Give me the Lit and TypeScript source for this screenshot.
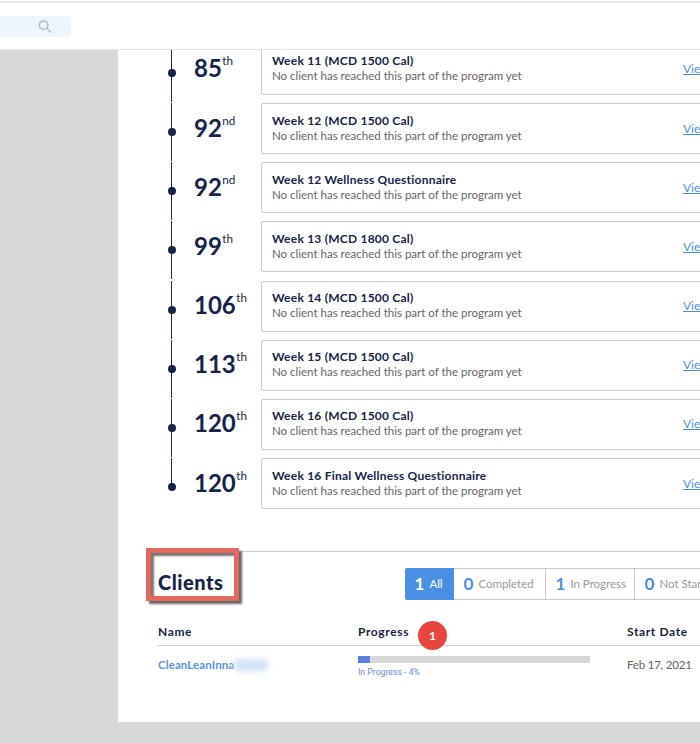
import { LitElement, html, css } from "lit";
import { customElement } from "lit/decorators.js";

interface Step { day: number; suffix: string; title: string; }

const STEPS: Step[] = [
  { day: 85, suffix: "th", title: "Week 11 (MCD 1500 Cal)" },
  { day: 92, suffix: "nd", title: "Week 12 (MCD 1500 Cal)" },
  { day: 92, suffix: "nd", title: "Week 12 Wellness Questionnaire" },
  { day: 99, suffix: "th", title: "Week 13 (MCD 1800 Cal)" },
  { day: 106, suffix: "th", title: "Week 14 (MCD 1500 Cal)" },
  { day: 113, suffix: "th", title: "Week 15 (MCD 1500 Cal)" },
  { day: 120, suffix: "th", title: "Week 16 (MCD 1500 Cal)" },
  { day: 120, suffix: "th", title: "Week 16 Final Wellness Questionnaire" },
];

@customElement("program-step")
class ProgramStep extends LitElement {
  static properties = { step: { attribute: false }, last: { type: Boolean, reflect: true } };
  declare step: Step;
  declare last: boolean;
  static styles = css`
    :host { display: grid; grid-template-columns: 76px 67px 1fr; height: 59.16px; width: 640px; box-sizing: border-box; }
    .rail { display: grid; justify-content: center; justify-items: center; grid-template-columns: 8px; margin-left: 32px; }
    .line { grid-area: 1 / 1; width: 1px; height: 58px; background: #1d2b4a; margin-right: 1px; }
    :host([last]) .line { height: 29px; }
    .dot { grid-area: 1 / 1; width: 8px; height: 8px; border-radius: 50%; background: #14244a; margin-top: 25px; }
    .day { display: flex; color: #14244a; }
    .num { font-size: 24px; font-weight: 700; line-height: 30px; margin-top: 9.42px; }
    .suf { font-size: 11.7px; line-height: 14px; margin-top: 9.42px; margin-left: 0.5px; }
    .card { height: 51px; box-sizing: border-box; border: 1px solid #c9cacc; border-radius: 2px; background: #fff; display: flex; justify-content: space-between; padding: 7.42px 10px 0; }
    .title { font-size: 12px; line-height: 17px; font-weight: 700; color: #14244a; letter-spacing: 0.23px; white-space: nowrap; width: max-content; }
    .sub { font-size: 11.5px; line-height: 13px; color: #666; white-space: nowrap; width: max-content; }
    .view { font-size: 12px; line-height: 16px; margin-top: 9px; color: #4a90e2; text-decoration: underline; margin-right: 13px; width: 51px; }
  `;
  render() {
    return html`
      <div class="rail"><span class="line"></span><span class="dot"></span></div>
      <div class="day"><span class="num">${this.step.day}</span><span class="suf">${this.step.suffix}</span></div>
      <div class="card">
        <div><div class="title">${this.step.title}</div><div class="sub">No client has reached this part of the program yet</div></div>
        <a class="view">View</a>
      </div>`;
  }
}

@customElement("app-root")
class AppRoot extends LitElement {
  static styles = css`
    :host { display: flex; flex-direction: column; width: 700px; height: 743px; overflow: hidden; background: #d8d8d8; font-family: Lato, "Open Sans", sans-serif; }
    .top { flex: none; height: 50px; box-sizing: border-box; border-bottom: 1px solid #e6e6e6; background: #fff; }
    .edge { height: 2px; margin-top: 1px; background: #e5e5e5; }
    .search { display: flex; align-items: center; justify-content: flex-end; width: 71px; height: 21px; margin-top: 13px; background: #eff5fe; border-radius: 0 3px 3px 0; box-sizing: border-box; padding-right: 19px; }
    .page { margin-left: 118px; height: 672px; background: #fff; overflow: hidden; flex: none; }
    .steps { margin-top: -6px; height: 473px; }
    .clients { width: 660px; margin: 34px 0 0 28px; padding: 0 12px; border-top: 1px solid #c9cacc; box-sizing: border-box; }
    .head { display: flex; justify-content: space-between; height: 62px; padding-top: 16px; box-sizing: border-box; }
    .box { width: 93px; height: 53px; box-sizing: border-box; margin: -20px 0 0 -12px; border: 5px solid #e2695c; box-shadow: 3px 3px 2px #666, inset 3px 3px 2px #777; display: flex; align-items: flex-end; padding: 0 0 1px 7px; }
    h2 { margin: 0; font-size: 20px; line-height: 26px; font-weight: 900; color: #14244a; letter-spacing: 0.5px; }
    .tabs { display: flex; height: 32px; box-sizing: border-box; border: 1px solid #c9cacc; border-radius: 2px; flex: none; margin-right: 15.5px; }
    .tab { display: flex; align-items: center; line-height: 30px; padding: 0 10px; border-right: 1px solid #c9cacc; color: #999; font-size: 11.5px; box-sizing: border-box; white-space: nowrap; }
    .tab b { color: #4a90e2; font-size: 17px; margin-right: 5px; }
    .tab.on { background: #4a90e2; color: #fff; margin: -1px 0 -1px -1px; line-height: 32px; border: 0; border-radius: 2px 0 0 2px; }
    .tab.on b { color: #fff; }
    .all { width: 49px; }
    .completed { width: 92px; }
    .progress { width: 89px; }
    .pending { width: 143px; border: 0; }
    .row { display: grid; grid-template-columns: 200px 269px 1fr; }
    .hd { height: 31px; border-bottom: 1px solid #cfd0d2; font-size: 12px; letter-spacing: 0.62px; font-weight: 700; color: #14244a; line-height: 35px; align-items: start; }
    .hd > * { display: flex; }
    .count { width: 29px; height: 29px; border-radius: 50%; background: #e8453f; color: #fff; display: grid; place-items: center; line-height: 29px; margin: 7px 0 -6px 9px; letter-spacing: 0; position: relative; }
    .name { color: #5b93dd; font-size: 11.5px; letter-spacing: 0.1px; line-height: 38px; height: 38px; display: flex; align-items: center; font-weight: 700; }
    .blur { width: 34px; height: 12px; background: #d3e1f7; filter: blur(3px); }
    .bar { width: 232px; height: 7px; background: #d8d8d8; margin-top: 10px; }
    .fill { height: 7px; background: #5f7fe0; }
    .pct { font: 8.7px/12px Roboto, sans-serif; color: #6d8be0; margin-top: 3px; }
    .date { color: #666; font-size: 11.5px; letter-spacing: -0.2px; line-height: 38px; }
  `;
  render() {
    return html`
      <header class="top"><div class="edge"></div>
        <div class="search"><svg width="14" height="14" viewBox="0 0 14 14" fill="none" stroke="#a9b4cc" stroke-width="1.3"><circle cx="5.6" cy="5.1" r="4.3"/><path d="M8.8 8.4 12.8 12.2"/></svg></div>
      </header>
      <main class="page">
        <div class="steps">${STEPS.map((s, i) => html`<program-step .step=${s} ?last=${i === STEPS.length - 1}></program-step>`)}</div>
        <section class="clients">
          <div class="head"><div class="box"><h2>Clients</h2></div>
            <div class="tabs">
              <div class="tab on all"><b>1</b>All</div>
              <div class="tab completed"><b>0</b>Completed</div>
              <div class="tab progress"><b>1</b>In Progress</div>
              <div class="tab pending"><b>0</b>Not Started</div>
            </div>
          </div>
          <div class="row hd"><span>Name</span><span>Progress<span class="count">1</span></span><span>Start Date</span></div>
          <div class="row"><span class="name">CleanLeanInna<span class="blur"></span></span>
            <span><div class="bar"><div class="fill" style="width:${(12 / 232) * 100}%"></div></div><div class="pct">In Progress - 4%</div></span>
            <span class="date">Feb 17, 2021</span></div>
        </section>
      </main>`;
  }
}
